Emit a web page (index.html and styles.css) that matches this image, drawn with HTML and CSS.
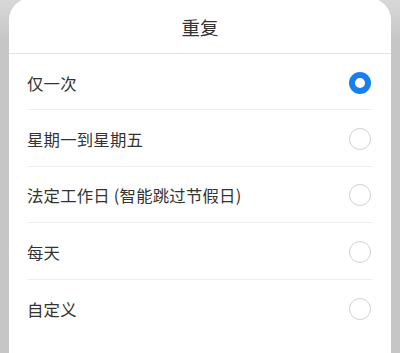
FILE: index.html
```html
<!DOCTYPE html>
<html lang="zh-CN">
<head>
<meta charset="utf-8">
<link rel="stylesheet" href="styles.css">
</head>
<body>
<div class="screen">
  <div class="sheet">
    <div class="title">重复</div>
    <ul class="list">
      <li class="row"><span class="label">仅一次</span><span class="radio on"></span></li>
      <li class="row"><span class="label">星期一到星期五</span><span class="radio"></span></li>
      <li class="row"><span class="label">法定工作日 (智能跳过节假日)</span><span class="radio"></span></li>
      <li class="row"><span class="label">每天</span><span class="radio"></span></li>
      <li class="row last"><span class="label">自定义</span><span class="radio"></span></li>
    </ul>
  </div>
</div>
</body>
</html>
```
FILE: styles.css
```css
* { box-sizing: border-box; }
html, body { margin: 0; padding: 0; }
body {
  width: 400px;
  height: 353px;
  overflow: hidden;
  background: #c6c6c6;
  font-family: "Noto Sans CJK SC", "Noto Sans", sans-serif;
}
.screen {
  height: 353px;
  overflow: hidden;
  padding: 0 9px 0 9px;
  background: linear-gradient(#d8d8d8 0, #c6c6c6 40px);
}
.sheet {
  height: 355px;
  margin-top: -2px;
  background: #fff;
  border-radius: 22px 22px 0 0;
}
.title {
  height: 56px;
  line-height: 58px;
  text-align: center;
  font-size: 18.5px;
  color: #333;
  border-bottom: 1px solid #e3e3e3;
}
.list {
  list-style: none;
  margin: 0;
  padding: 0 18px;
}
.row {
  height: 56.4px;
  display: flex;
  align-items: center;
  justify-content: space-between;
  border-bottom: 1px solid #eeeeee;
  padding-top: 2px;
}
.row.last { border-bottom: none; }
.label {
  font-size: 16.4px;
  color: #333;
  letter-spacing: 0.2px;
}
.radio {
  width: 22px;
  height: 22px;
  border-radius: 50%;
  border: 1.5px solid #d2d2d2;
  margin-right: 2px;
}
.radio.on {
  border: 6px solid #1a7ef3;
}
```
